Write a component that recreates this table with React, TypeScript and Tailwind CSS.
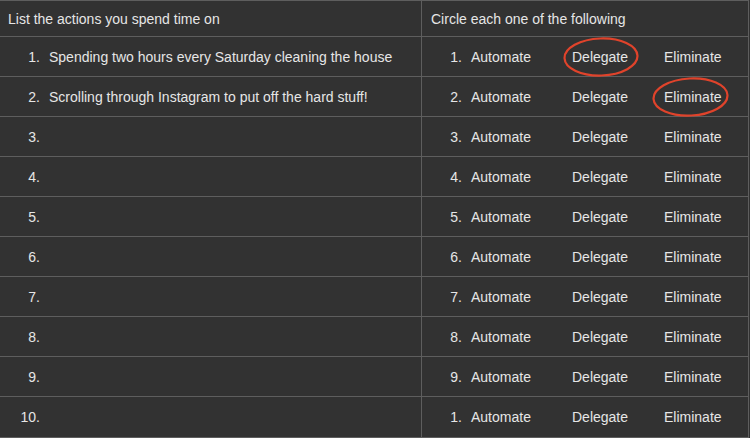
import React from "react";

const rows = [
  { n: "1.", text: "Spending two hours every Saturday cleaning the house", rn: "1.", circle: "d" },
  { n: "2.", text: "Scrolling through Instagram to put off the hard stuff!", rn: "2.", circle: "e" },
  { n: "3.", text: "", rn: "3.", circle: "" },
  { n: "4.", text: "", rn: "4.", circle: "" },
  { n: "5.", text: "", rn: "5.", circle: "" },
  { n: "6.", text: "", rn: "6.", circle: "" },
  { n: "7.", text: "", rn: "7.", circle: "" },
  { n: "8.", text: "", rn: "8.", circle: "" },
  { n: "9.", text: "", rn: "9.", circle: "" },
  { n: "10.", text: "", rn: "1.", circle: "" },
];

function Ring({ w, h, left, rot }: { w: number; h: number; left: number; rot: number }) {
  return (
    <svg
      className="absolute pointer-events-none"
      style={{ left, top: `calc(50% - ${h / 2}px)`, width: w, height: h }}
      viewBox={`0 0 ${w} ${h}`}
    >
      <ellipse
        cx={w / 2}
        cy={h / 2}
        rx={w / 2 - 1.5}
        ry={h / 2 - 1.5}
        fill="none"
        stroke="#e0432b"
        strokeWidth="2.2"
        transform={`rotate(${rot} ${w / 2} ${h / 2})`}
      />
    </svg>
  );
}

export default function App() {
  return (
    <div
      className="w-[750px] h-[438px] bg-[#323232] text-[#e6e6e6] text-[14px] overflow-hidden"
      style={{ fontFamily: '"Liberation Sans", Arial, sans-serif' }}
    >
      <div className="w-[749px] border-r border-b border-t border-[#5e5e5e]">
        <div className="flex h-[36px] border-b border-[#5e5e5e]">
          <div className="w-[422px] shrink-0 border-r border-[#5e5e5e] flex items-center pl-[8px] pt-[1px]">
            List the actions you spend time on
          </div>
          <div className="flex-1 flex items-center pl-[9px] pt-[1px]">Circle each one of the following</div>
        </div>
        {rows.map((r, i) => (
          <div
            key={i}
            className={`flex h-[40px] ${i < rows.length - 1 ? "border-b border-[#5e5e5e]" : ""}`}
          >
            <div className="w-[422px] shrink-0 border-r border-[#5e5e5e] flex items-center pt-[1px]">
              <span className="w-[40px] text-right">{r.n}</span>
              <span className="ml-[9px]">{r.text}</span>
            </div>
            <div className="flex-1 flex items-center pt-[1px]">
              <span className="w-[40px] text-right">{r.rn}</span>
              <span className="ml-[9px] w-[101px]">Automate</span>
              <span className="relative w-[92px]">
                Delegate
                {r.circle === "d" && <Ring w={76} h={40} left={-9} rot={-2} />}
              </span>
              <span className="relative">
                Eliminate
                {r.circle === "e" && <Ring w={77} h={40} left={-12} rot={-3} />}
              </span>
            </div>
          </div>
        ))}
      </div>
    </div>
  );
}
